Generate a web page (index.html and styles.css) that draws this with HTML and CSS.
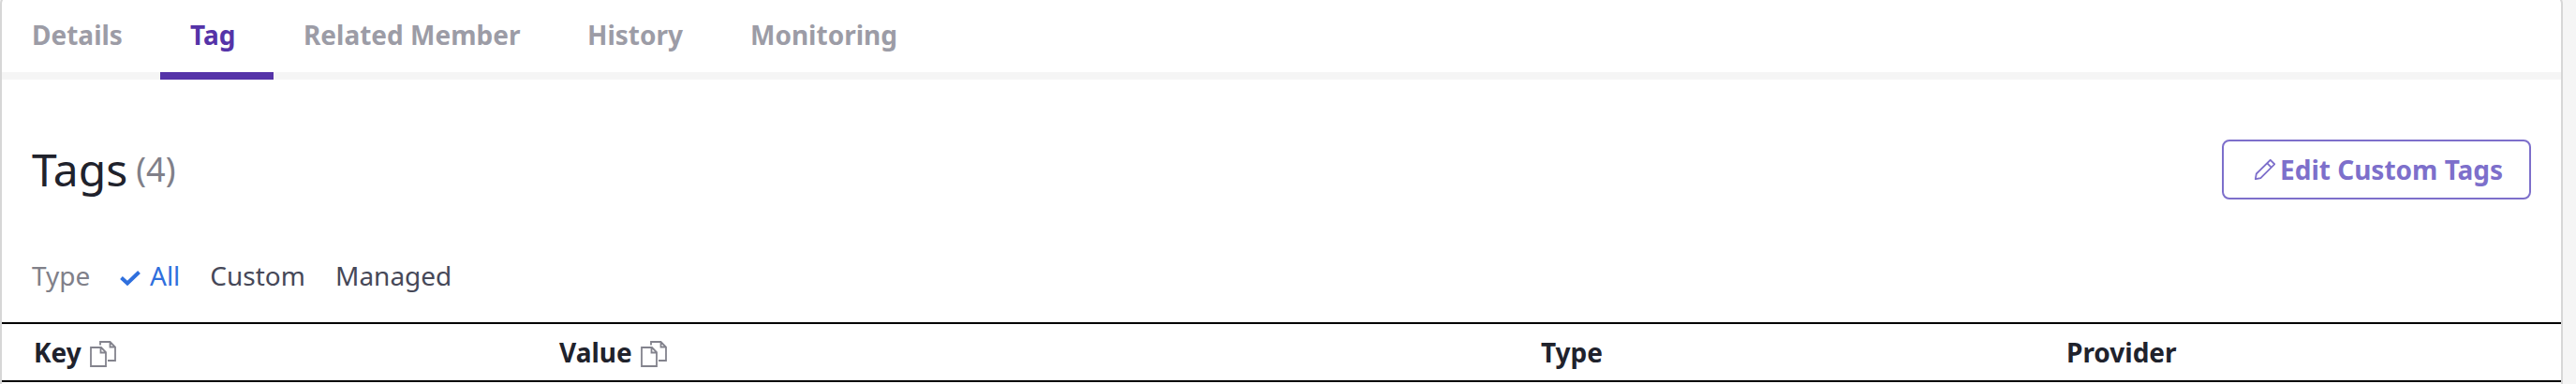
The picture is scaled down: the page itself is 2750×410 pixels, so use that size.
FILE: index.html
```html
<!DOCTYPE html>
<html lang="en">
<head>
<meta charset="utf-8">
<title>Tags</title>
<link rel="stylesheet" href="styles.css">
</head>
<body>
<main class="card">
  <nav class="tabs">
    <a class="tab tab-details">Details</a>
    <a class="tab tab-tag active">Tag</a>
    <a class="tab tab-related">Related Member</a>
    <a class="tab tab-history">History</a>
    <a class="tab">Monitoring</a>
  </nav>
  <header class="heading">
    <h1 class="title">Tags</h1>
    <span class="count">(4)</span>
    <button class="edit">
      <svg class="pencil" viewBox="0 0 22 22"><path d="M.8 21.2L1.800 15.500L16.700 .8L21.200 5.300L6.300 20.200ZM13.200 4.200L17.800 8.800"/></svg>
      <span>Edit Custom Tags</span>
    </button>
  </header>
  <div class="filter">
    <span class="filter-label">Type</span>
    <span class="option selected"><svg class="check" viewBox="0 0 22 16"><path d="M1.5 7.5L8 13.5L20.5 1.5"/></svg>All</span>
    <span class="option">Custom</span>
    <span class="option">Managed</span>
  </div>
  <div class="table-head">
    <div class="th">Key<svg class="copy" viewBox="0 0 28 28"><path d="M1 7H12L17 12V27H1ZM11.500 7V12.500H17M11 4.500V1H21.500L27 6.500V21H19M21.500 1V6.500H27"/></svg></div>
    <div class="th">Value<svg class="copy" viewBox="0 0 28 28"><path d="M1 7H12L17 12V27H1ZM11.500 7V12.500H17M11 4.500V1H21.500L27 6.500V21H19M21.500 1V6.500H27"/></svg></div>
    <div class="th">Type</div>
    <div class="th">Provider</div>
  </div>
</main>
</body>
</html>
```
FILE: styles.css
```css
* { box-sizing: border-box; }
body {
  margin: 0;
  height: 410px;
  overflow: hidden;
  background: #f5f5f5;
  font-family: "Noto Sans", sans-serif;
  font-size: 28px;
  color: #20222c;
}
.card {
  width: 2736px;
  height: 416px;
  margin-top: -6px;
  border: 2px solid #d6d6d6;
  border-bottom: 0;
  border-radius: 10px 10px 0 0;
  background: #fff;
}
.tabs {
  display: flex;
  height: 89px;
  border-bottom: 8px solid #f5f5f5;
}
.tab {
  height: 89px;
  padding: 22px 32px 0;
  line-height: 38px;
  font-weight: 700;
  color: #9c9ca6;
  white-space: nowrap;
}
.tab-details { width: 169px; }
.tab-tag { width: 121px; }
.tab-related { width: 303px; }
.tab-history { width: 174px; }
.tab.active {
  color: #5533a8;
  border-bottom: 8px solid #5533a8;
}
.heading {
  display: flex;
  align-items: center;
  height: 64px;
  margin: 64px 32px 0;
}
.title {
  margin: 0;
  font-size: 48px;
  font-weight: 400;
  line-height: 64px;
}
.count {
  margin-left: 9px;
  font-size: 36px;
  line-height: 64px;
  color: #808089;
}
.edit {
  display: flex;
  align-items: center;
  width: 330px;
  height: 64px;
  margin-left: auto;
  padding: 0 0 0 33px;
  border: 2px solid #7d6fcb;
  border-radius: 8px;
  background: #fff;
  font: 700 28px/38px "Noto Sans", sans-serif;
  color: #7d6fcb;
  white-space: nowrap;
}
.pencil {
  width: 22px;
  height: 22px;
  margin-right: 5px;
}
.pencil path, .copy path {
  fill: none;
  stroke: currentColor;
  stroke-width: 1.8;
}
.filter {
  display: flex;
  height: 38px;
  margin: 62px 32px 0;
  line-height: 38px;
}
.filter-label {
  width: 94px;
  color: #808089;
}
.option {
  margin-right: 32px;
  color: #464858;
}
.selected { color: #2f6fdd; }
.check {
  width: 22px;
  height: 16px;
  margin-right: 10px;
}
.check path {
  fill: none;
  stroke: currentColor;
  stroke-width: 4;
}
.table-head {
  display: grid;
  grid-template-columns: 561px 1048px 561px 1fr;
  align-items: center;
  height: 64px;
  margin-top: 31px;
  padding-left: 34px;
  border-top: 2px solid #000;
  border-bottom: 2px solid #000;
}
.th {
  display: flex;
  align-items: center;
  font-weight: 700;
  line-height: 38px;
}
.copy {
  width: 28px;
  height: 28px;
  margin: 4px 0 0 9.5px;
  color: #83838d;
}
```
